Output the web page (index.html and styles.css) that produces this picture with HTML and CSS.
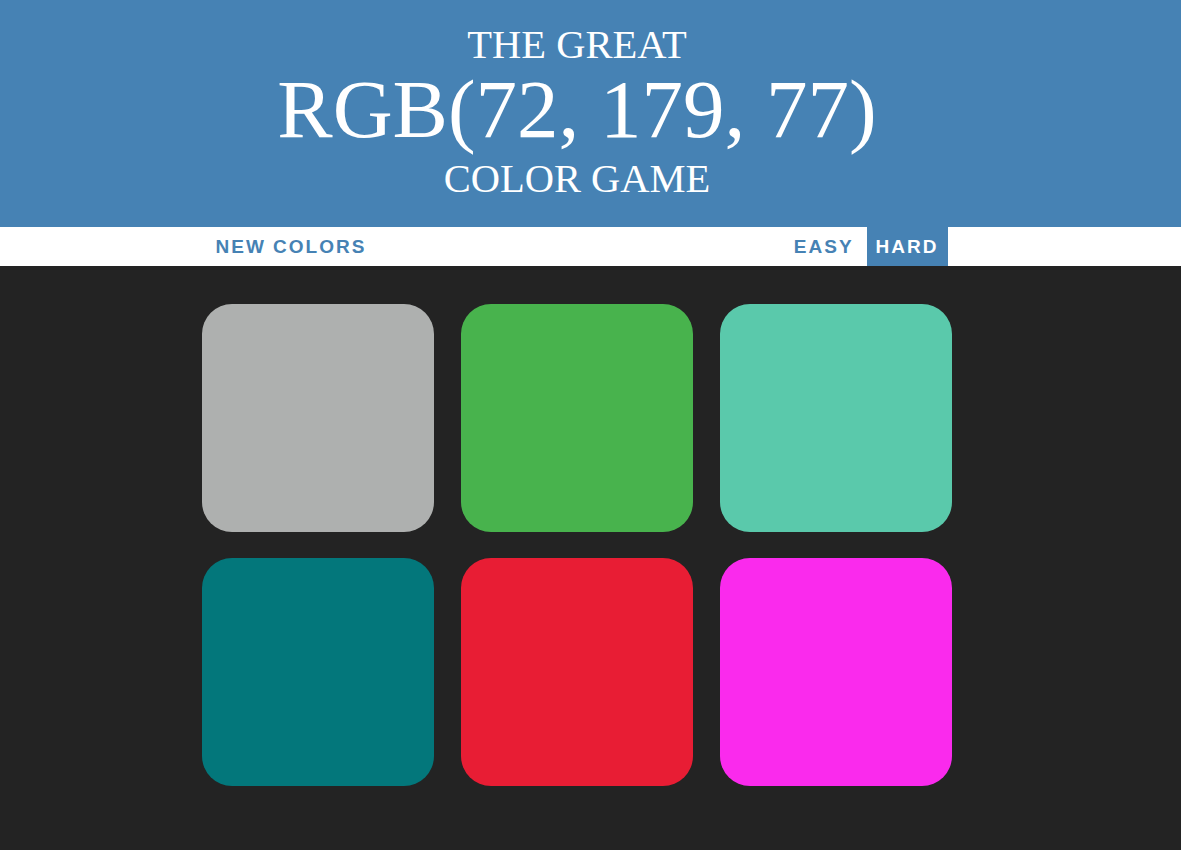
FILE: index.html
```html
<!DOCTYPE html>
<html lang="en">
<head>
<meta charset="utf-8">
<title>Color Game</title>
<link rel="stylesheet" href="styles.css">
</head>
<body>
<header class="header">
  <h1 class="title">
    <span class="title-line">THE GREAT</span>
    <span class="title-rgb">RGB(72, 179, 77)</span>
    <span class="title-line title-last">COLOR GAME</span>
  </h1>
</header>
<nav class="nav">
  <div class="nav-inner">
    <button class="btn">NEW COLORS</button>
    <div class="modes">
      <button class="btn">EASY</button>
      <button class="btn btn-selected">HARD</button>
    </div>
  </div>
</nav>
<main class="board">
  <div class="grid">
    <div class="square" style="background: rgb(174, 176, 175)"></div>
    <div class="square" style="background: rgb(72, 179, 77)"></div>
    <div class="square" style="background: rgb(90, 201, 171)"></div>
    <div class="square" style="background: rgb(3, 119, 123)"></div>
    <div class="square" style="background: rgb(232, 29, 52)"></div>
    <div class="square" style="background: rgb(250, 42, 237)"></div>
  </div>
</main>
</body>
</html>
```
FILE: styles.css
```css
html, body {
  margin: 0;
  padding: 0;
}
body {
  background: #232323;
  min-height: 850px;
}
.header {
  background: #4682b4;
  color: #ffffff;
  height: 227px;
  box-sizing: border-box;
  padding: 21px 27px 0 0;
  text-align: center;
  font-family: "Liberation Serif", "Times New Roman", serif;
}
.title {
  margin: 0;
  font-weight: normal;
}
.title-line {
  display: block;
  font-size: 40.5px;
  line-height: 48px;
}
.title-rgb {
  display: block;
  font-size: 83px;
  line-height: 80px;
  margin-bottom: 6px;
}
.nav {
  background: #ffffff;
  height: 39px;
  padding-right: 27px;
}
.nav-inner {
  width: 741px;
  margin: 0 auto;
  display: flex;
  justify-content: space-between;
  height: 39px;
}
.modes {
  display: flex;
  gap: 4px;
}
.btn {
  border: none;
  background: transparent;
  color: #4682b4;
  font-family: "Liberation Sans", Arial, sans-serif;
  font-weight: bold;
  font-size: 19px;
  letter-spacing: 2px;
  line-height: 39px;
  height: 39px;
  padding: 0 9px;
  margin: 0;
  cursor: pointer;
}
.btn-selected {
  background: #4682b4;
  color: #ffffff;
}
.board {
  padding: 38px 27px 0 0;
}
.grid {
  width: 750px;
  margin: 0 auto;
  display: grid;
  grid-template-columns: repeat(3, 232px);
  column-gap: 27px;
  row-gap: 26px;
}
.square {
  height: 228px;
  border-radius: 30px;
}
```
